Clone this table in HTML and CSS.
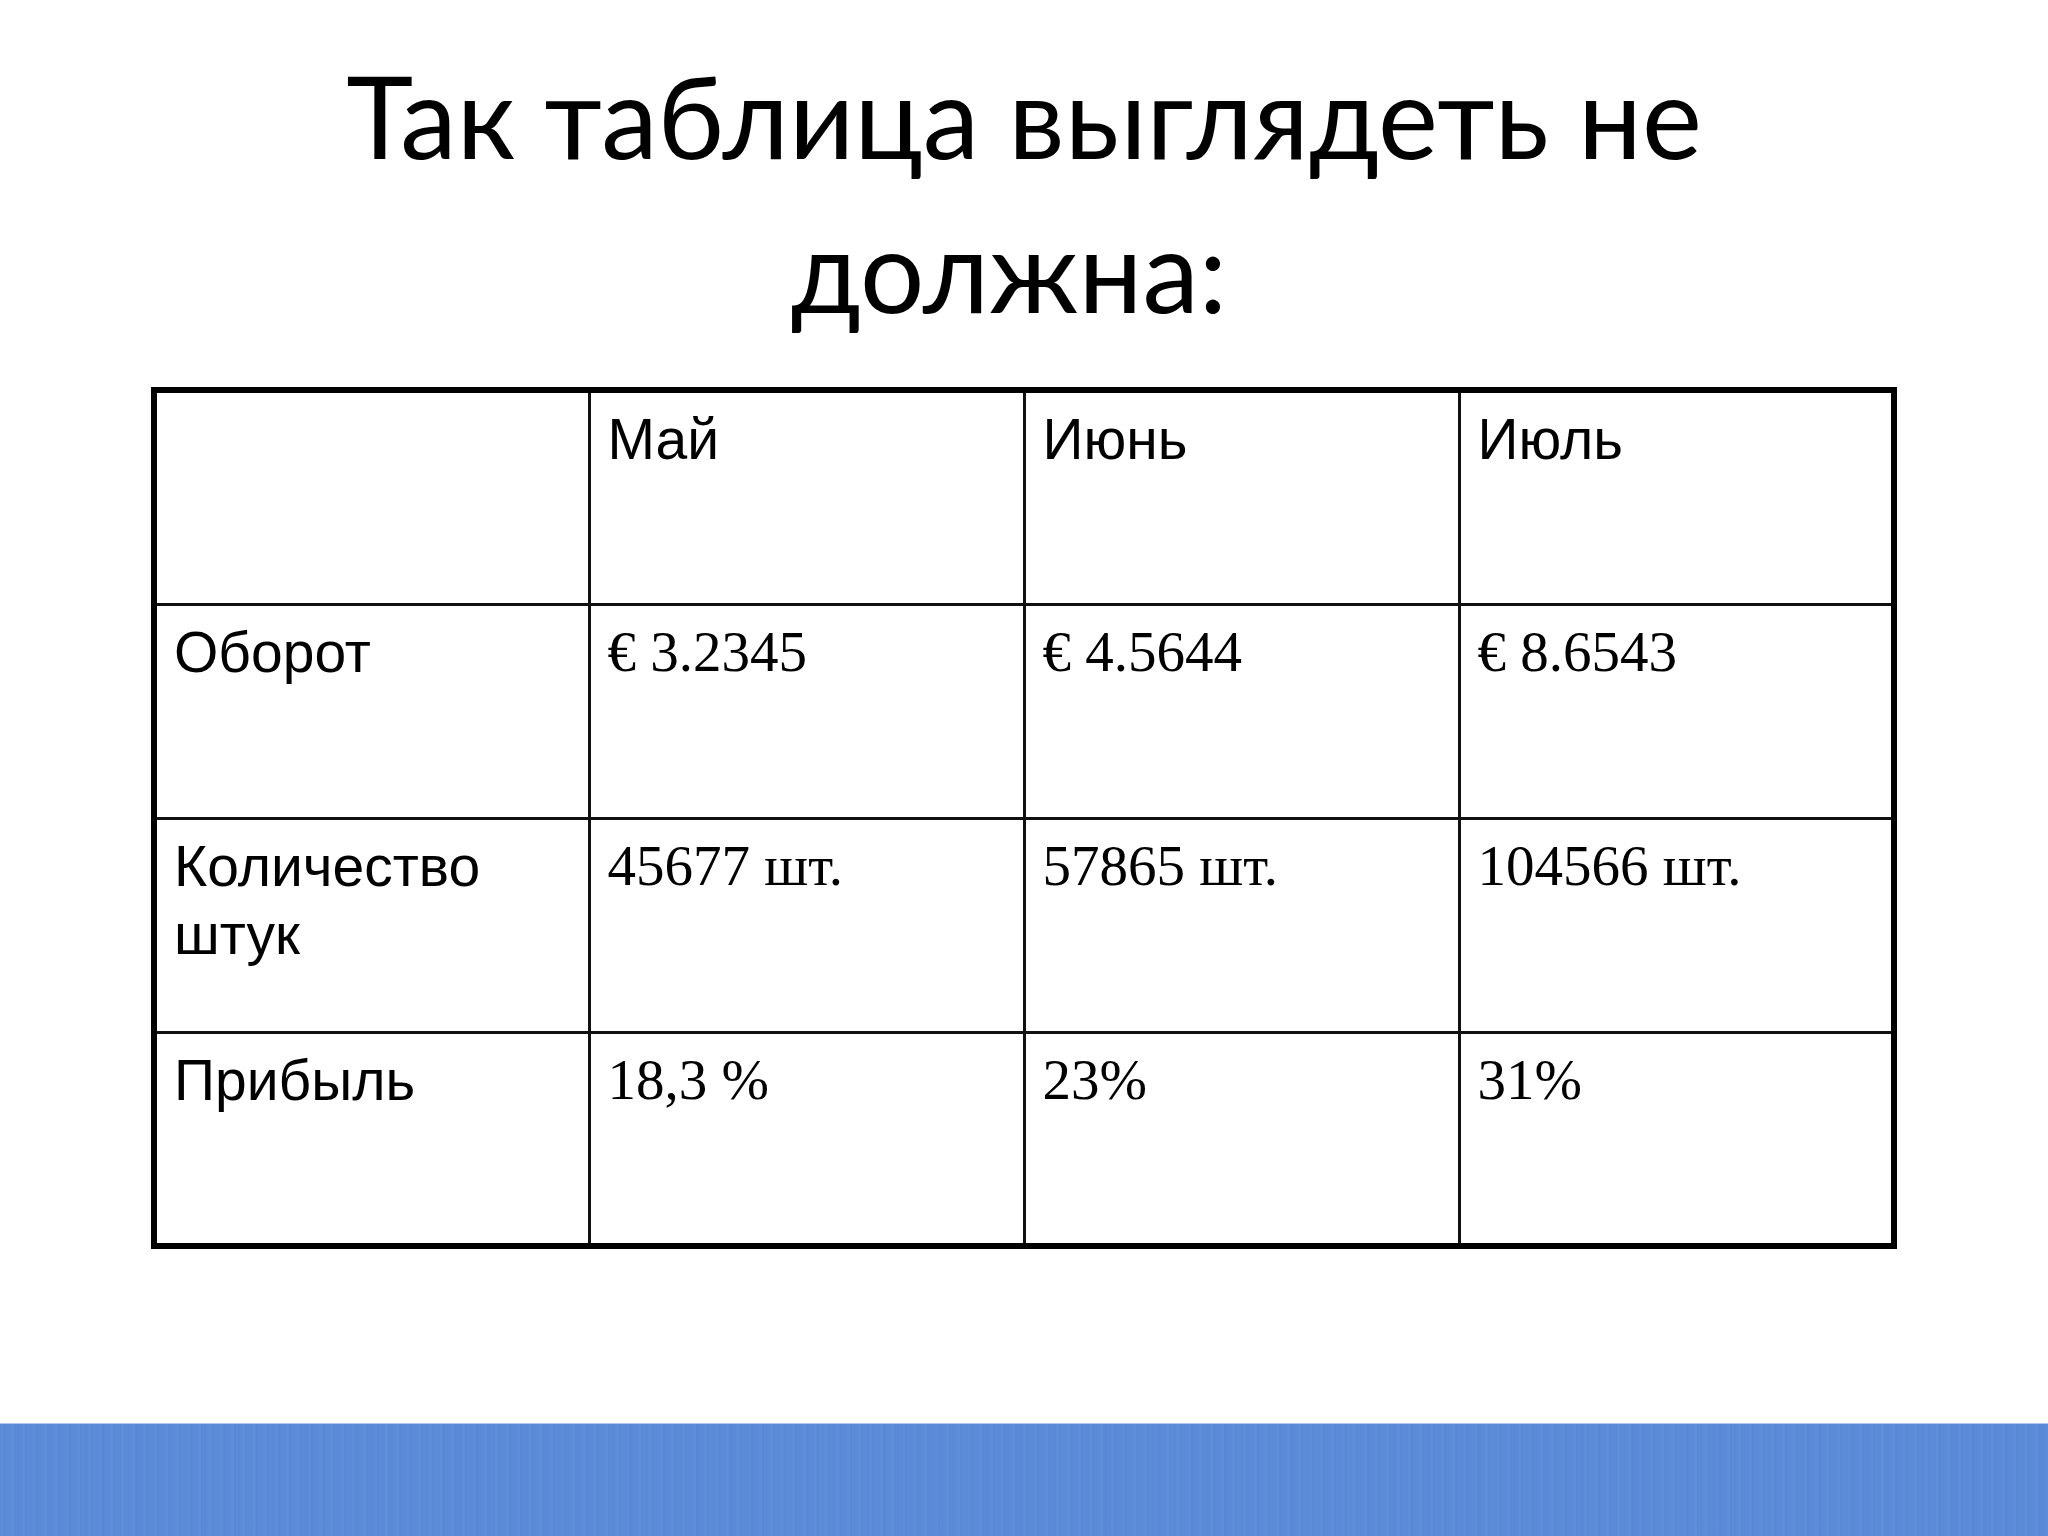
FILE: index.html
```html
<!DOCTYPE html>
<html lang="ru">
<head>
<meta charset="utf-8">
<title>Так таблица выглядеть не должна</title>
<link rel="stylesheet" href="styles.css">
</head>
<body>
<div class="slide">
  <h1 class="title">Так таблица выглядеть не<br><span class="line2">должна:</span></h1>
  <table class="data">
    <tr>
      <td class="sans"></td>
      <td class="sans">Май</td>
      <td class="sans">Июнь</td>
      <td class="sans">Июль</td>
    </tr>
    <tr>
      <td class="sans">Оборот</td>
      <td class="serif">€ 3.2345</td>
      <td class="serif">€ 4.5644</td>
      <td class="serif">€ 8.6543</td>
    </tr>
    <tr>
      <td class="sans">Количество штук</td>
      <td class="serif">45677 шт.</td>
      <td class="serif">57865 шт.</td>
      <td class="serif">104566 шт.</td>
    </tr>
    <tr>
      <td class="sans">Прибыль</td>
      <td class="serif">18,3 %</td>
      <td class="serif">23%</td>
      <td class="serif">31%</td>
    </tr>
  </table>
  <div class="spacer"></div>
  <div class="band"></div>
</div>
</body>
</html>
```

FILE: styles.css
```css
html, body {
  margin: 0;
  padding: 0;
  background: #ffffff;
}

.slide {
  width: 2048px;
  height: 1536px;
  display: flex;
  flex-direction: column;
  background: #ffffff;
  overflow: hidden;
}

.title {
  margin: 0;
  padding-top: 38px;
  font-family: Lato, "Open Sans", sans-serif;
  font-weight: 400;
  font-size: 113.5px;
  line-height: 154px;
  text-align: center;
  color: #000000;
}

.title .line2 {
  padding-right: 30px;
}

.data {
  margin: 41px 0 0 151px;
  width: 1746px;
  table-layout: fixed;
  border-collapse: collapse;
  border: 6px solid #000000;
}

.data td {
  width: 25%;
  height: 214px;
  box-sizing: border-box;
  border: 3px solid #111111;
  padding: 12px 20px 0 17px;
  vertical-align: top;
  font-size: 57px;
  line-height: 68px;
  color: #000000;
}

.data td.sans {
  font-family: "Liberation Sans", Arial, sans-serif;
}

.data td.serif {
  font-family: "Liberation Serif", "Times New Roman", serif;
}

.spacer {
  flex: 1;
}

.band {
  height: 112px;
  border-top: 1px solid #b0c8ee;
  background-color: #5a8ad8;
  background-image:
    repeating-linear-gradient(90deg, rgba(255,255,255,0.025) 0 3px, rgba(0,0,0,0.015) 3px 5px, rgba(255,255,255,0) 5px 11px),
    repeating-linear-gradient(90deg, rgba(40,80,170,0.03) 0 2px, rgba(255,255,255,0) 2px 17px);
}
```
